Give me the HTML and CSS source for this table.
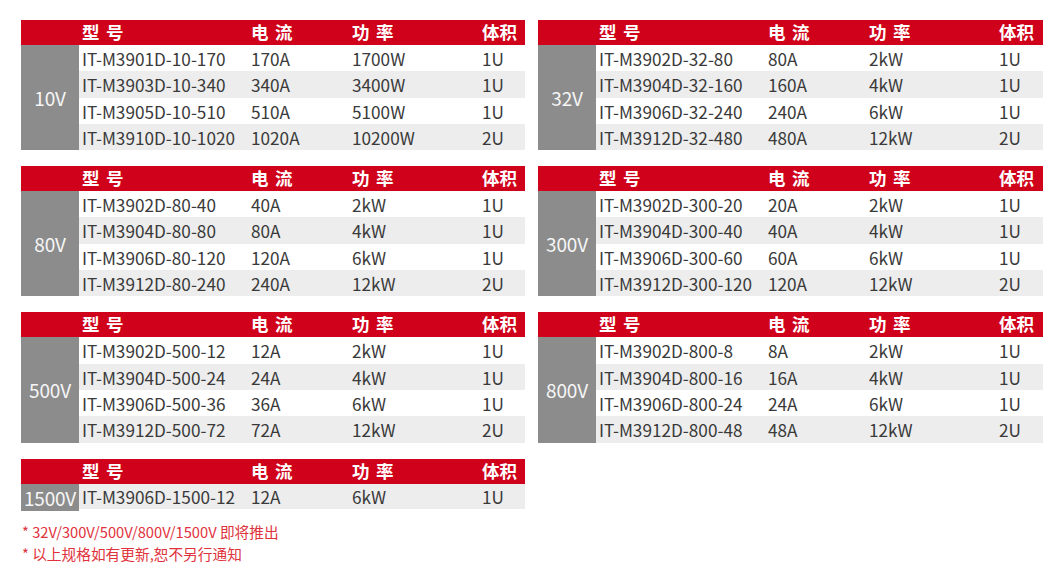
FILE: index.html
```html
<!DOCTYPE html>
<html lang="zh">
<head>
<meta charset="utf-8">
<title>IT-M3900D 规格</title>
<link rel="stylesheet" href="styles.css">
</head>
<body>
<div class="page">
  <div class="tables">
    <div class="spec">
      <div class="head"><span></span><span>型 号</span><span>电 流</span><span>功 率</span><span>体积</span></div>
      <div class="body">
        <div class="volt">10V</div>
        <div class="rows">
          <div class="row"><span>IT-M3901D-10-170</span><span>170A</span><span>1700W</span><span>1U</span></div>
          <div class="row"><span>IT-M3903D-10-340</span><span>340A</span><span>3400W</span><span>1U</span></div>
          <div class="row"><span>IT-M3905D-10-510</span><span>510A</span><span>5100W</span><span>1U</span></div>
          <div class="row"><span>IT-M3910D-10-1020</span><span>1020A</span><span>10200W</span><span>2U</span></div>
        </div>
      </div>
    </div>
    <div class="spec">
      <div class="head"><span></span><span>型 号</span><span>电 流</span><span>功 率</span><span>体积</span></div>
      <div class="body">
        <div class="volt">32V</div>
        <div class="rows">
          <div class="row"><span>IT-M3902D-32-80</span><span>80A</span><span>2kW</span><span>1U</span></div>
          <div class="row"><span>IT-M3904D-32-160</span><span>160A</span><span>4kW</span><span>1U</span></div>
          <div class="row"><span>IT-M3906D-32-240</span><span>240A</span><span>6kW</span><span>1U</span></div>
          <div class="row"><span>IT-M3912D-32-480</span><span>480A</span><span>12kW</span><span>2U</span></div>
        </div>
      </div>
    </div>
    <div class="spec">
      <div class="head"><span></span><span>型 号</span><span>电 流</span><span>功 率</span><span>体积</span></div>
      <div class="body">
        <div class="volt">80V</div>
        <div class="rows">
          <div class="row"><span>IT-M3902D-80-40</span><span>40A</span><span>2kW</span><span>1U</span></div>
          <div class="row"><span>IT-M3904D-80-80</span><span>80A</span><span>4kW</span><span>1U</span></div>
          <div class="row"><span>IT-M3906D-80-120</span><span>120A</span><span>6kW</span><span>1U</span></div>
          <div class="row"><span>IT-M3912D-80-240</span><span>240A</span><span>12kW</span><span>2U</span></div>
        </div>
      </div>
    </div>
    <div class="spec">
      <div class="head"><span></span><span>型 号</span><span>电 流</span><span>功 率</span><span>体积</span></div>
      <div class="body">
        <div class="volt">300V</div>
        <div class="rows">
          <div class="row"><span>IT-M3902D-300-20</span><span>20A</span><span>2kW</span><span>1U</span></div>
          <div class="row"><span>IT-M3904D-300-40</span><span>40A</span><span>4kW</span><span>1U</span></div>
          <div class="row"><span>IT-M3906D-300-60</span><span>60A</span><span>6kW</span><span>1U</span></div>
          <div class="row"><span>IT-M3912D-300-120</span><span>120A</span><span>12kW</span><span>2U</span></div>
        </div>
      </div>
    </div>
    <div class="spec">
      <div class="head"><span></span><span>型 号</span><span>电 流</span><span>功 率</span><span>体积</span></div>
      <div class="body">
        <div class="volt">500V</div>
        <div class="rows">
          <div class="row"><span>IT-M3902D-500-12</span><span>12A</span><span>2kW</span><span>1U</span></div>
          <div class="row"><span>IT-M3904D-500-24</span><span>24A</span><span>4kW</span><span>1U</span></div>
          <div class="row"><span>IT-M3906D-500-36</span><span>36A</span><span>6kW</span><span>1U</span></div>
          <div class="row"><span>IT-M3912D-500-72</span><span>72A</span><span>12kW</span><span>2U</span></div>
        </div>
      </div>
    </div>
    <div class="spec">
      <div class="head"><span></span><span>型 号</span><span>电 流</span><span>功 率</span><span>体积</span></div>
      <div class="body">
        <div class="volt">800V</div>
        <div class="rows">
          <div class="row"><span>IT-M3902D-800-8</span><span>8A</span><span>2kW</span><span>1U</span></div>
          <div class="row"><span>IT-M3904D-800-16</span><span>16A</span><span>4kW</span><span>1U</span></div>
          <div class="row"><span>IT-M3906D-800-24</span><span>24A</span><span>6kW</span><span>1U</span></div>
          <div class="row"><span>IT-M3912D-800-48</span><span>48A</span><span>12kW</span><span>2U</span></div>
        </div>
      </div>
    </div>
    <div class="spec single">
      <div class="head"><span></span><span>型 号</span><span>电 流</span><span>功 率</span><span>体积</span></div>
      <div class="body">
        <div class="volt">1500V</div>
        <div class="rows">
          <div class="row alt"><span>IT-M3906D-1500-12</span><span>12A</span><span>6kW</span><span>1U</span></div>
        </div>
      </div>
    </div>
  </div>
  <div class="notes">
    <p>* 32V/300V/500V/800V/1500V 即将推出</p>
    <p>* 以上规格如有更新,恕不另行通知</p>
  </div>
</div>
</body>
</html>
```

FILE: styles.css
```css
* { box-sizing: border-box; }
html, body { margin: 0; padding: 0; background: #fff; }
body {
  font-family: "Noto Sans CJK SC", "Noto Sans", sans-serif;
  color: #3a3a3a;
}
.page { padding: 20px 17px 0 21px; }
.tables {
  display: grid;
  grid-template-columns: 504px 505px;
  column-gap: 13px;
  row-gap: 16px;
}
.spec { display: flex; flex-direction: column; }
.head {
  display: grid;
  grid-template-columns: 58px 169px 101px 130px 1fr;
  height: 25px;
  background: #d0021b;
  color: #fff;
  font-weight: 700;
  font-size: 17.5px;
  line-height: 24px;
  white-space: pre;
  word-spacing: 2.5px;
}
.head span { padding-left: 3px; }
.body { display: flex; }
.volt {
  width: 58px;
  flex: none;
  background: #8c8c8c;
  color: #f6f6f6;
  font-size: 19px;
  font-weight: 400;
  display: flex;
  align-items: center;
  justify-content: center;
  white-space: nowrap;
  letter-spacing: -0.2px;
}
.rows { flex: 1; display: flex; flex-direction: column; }
.row {
  display: grid;
  grid-template-columns: 169px 101px 130px 1fr;
  height: 26.3px;
  font-size: 17.2px;
  line-height: 27px;
  background: #fff;
}
.row:nth-child(even), .row.alt { background: #ededed; }
.single .row { height: 25.5px; line-height: 26px; }
.row span { padding-left: 3px; white-space: nowrap; }
.notes {
  margin-top: 10px;
  color: #e0323c;
  font-size: 14.7px;
  line-height: 22px;
}
.notes p { margin: 0; padding-left: 1px; }
```
